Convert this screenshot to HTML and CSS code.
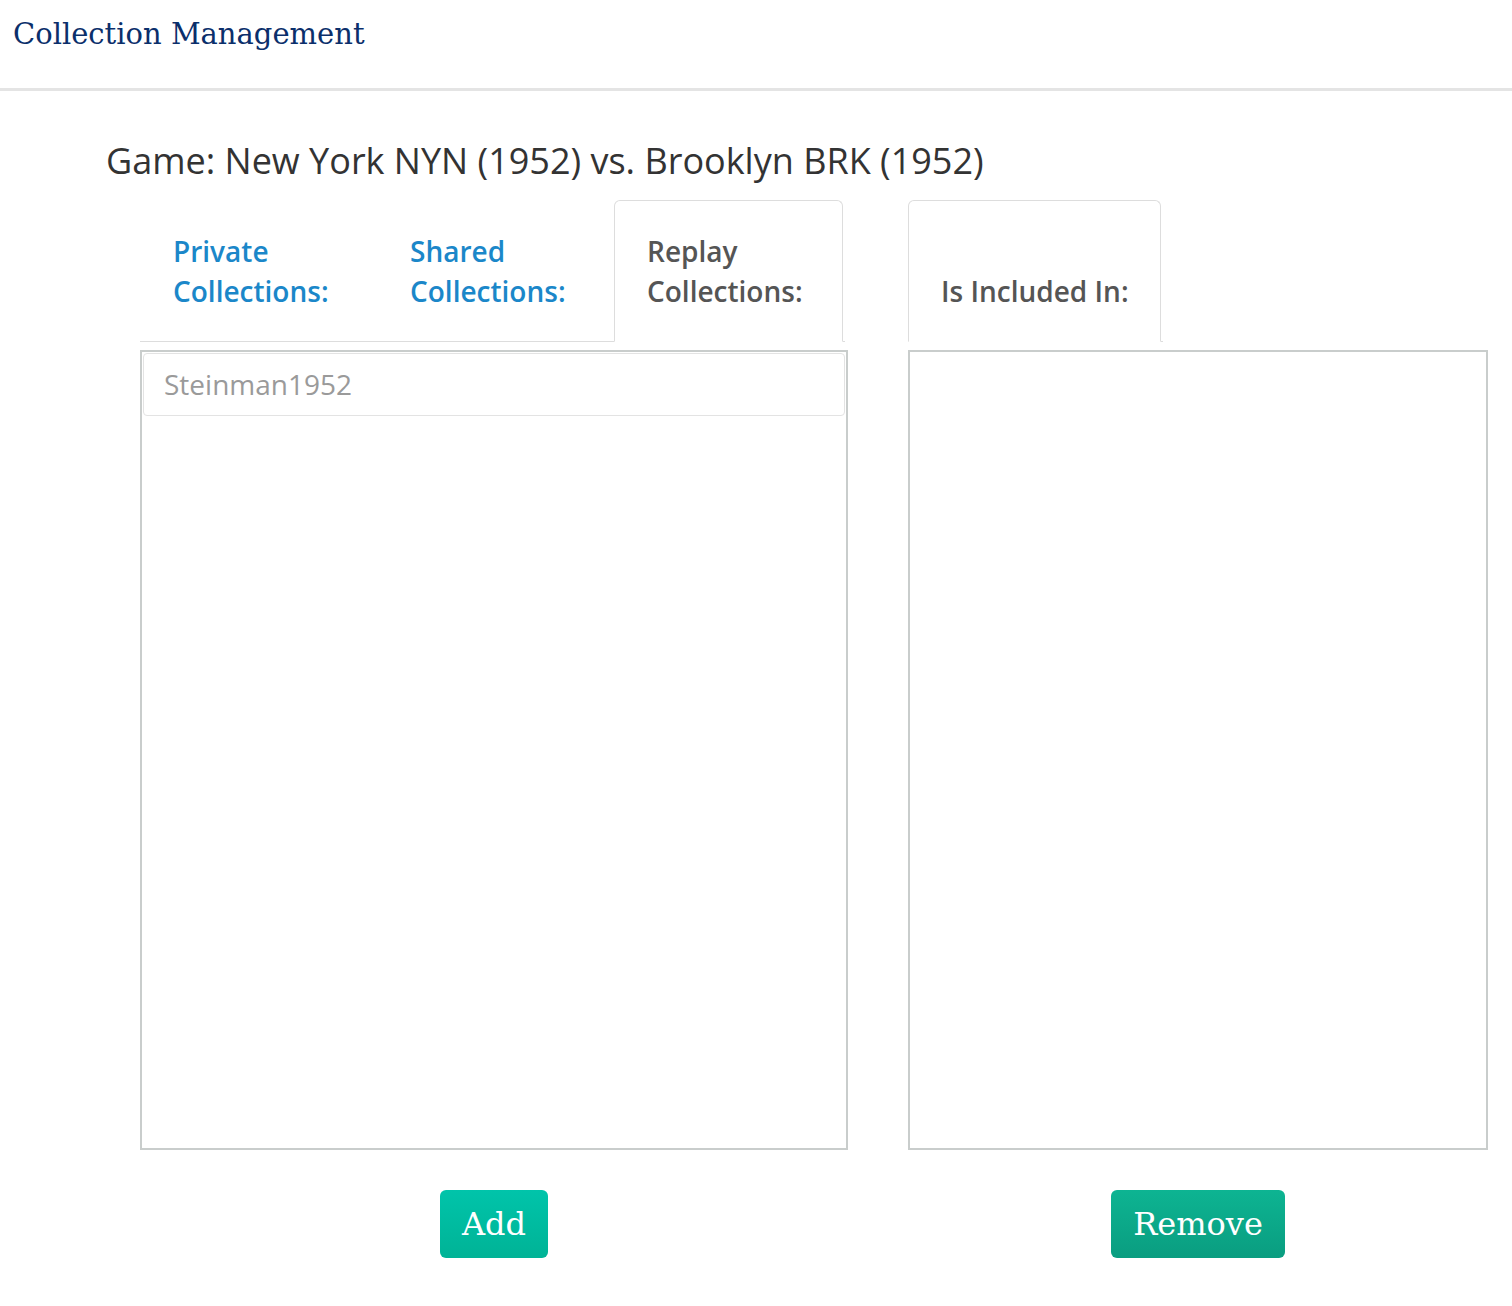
FILE: index.html
```html
<!DOCTYPE html>
<html lang="en">
<head>
  <meta charset="UTF-8">
  <meta name="viewport" content="width=device-width, initial-scale=1.0">
  <title>Collection Management</title>
  <link rel="stylesheet" href="styles.css">
</head>
<body>
  <header class="topbar">
    <h1>Collection Management</h1>
  </header>

  <main class="page">
    <h2 class="game-title">Game: New York NYN (1952) vs. Brooklyn BRK (1952)</h2>

    <div class="columns">
      <!-- Collections available -->
      <section class="col col-left">
        <ul class="tabs">
          <li class="tab"><a href="#">Private<br>Collections:</a></li>
          <li class="tab"><a href="#">Shared<br>Collections:</a></li>
          <li class="tab tab-replay active"><a href="#">Replay<br>Collections:</a></li>
        </ul>
        <div class="listbox">
          <div class="list-item">Steinman1952</div>
        </div>
        <div class="actions">
          <button class="btn btn-add">Add</button>
        </div>
      </section>

      <!-- Collections containing the game -->
      <section class="col col-right">
        <ul class="tabs">
          <li class="tab tab-included active"><a href="#">Is Included In:</a></li>
        </ul>
        <div class="listbox"></div>
        <div class="actions">
          <button class="btn btn-remove">Remove</button>
        </div>
      </section>
    </div>
  </main>
</body>
</html>
```

FILE: styles.css
```css
body {
  margin: 0;
  font-family: "Open Sans", Arial, sans-serif;
  color: #333;
  background: #fff;
}
.topbar {
  height: 88px;
  border-bottom: 3px solid #e4e4e4;
  padding: 0 13px;
}
.topbar h1 {
  margin: 0;
  padding-top: 14px;
  font-family: "DejaVu Serif", "Liberation Serif", serif;
  font-weight: normal;
  font-size: 29px;
  line-height: 40px;
  color: #0b2f6b;
}
.page {
  padding: 0 24px 0 106px;
}
.game-title {
  margin: 48px 0 17px;
  font-size: 36px;
  font-weight: normal;
  line-height: 44px;
  color: #333;
}
.columns {
  display: flex;
  gap: 60px;
  margin-left: 34px;
}
.col-left {
  width: 708px;
}
.col-right {
  width: 580px;
}
.tabs {
  display: inline-flex;
  align-items: flex-end;
  margin: 0 0 8px;
  padding: 0;
  list-style: none;
  border-bottom: 1px solid #ddd;
  vertical-align: top;
}
.tab {
  width: 235px;
  height: 142px;
  margin: 0 2px -1px 0;
  border: 1px solid transparent;
  border-radius: 6px 6px 0 0;
  box-sizing: border-box;
  display: flex;
  align-items: flex-end;
}
.tab a {
  display: block;
  padding: 0 0 30px 32px;
  font-size: 28px;
  font-weight: 600;
  line-height: 40px;
  color: #1b87c9;
  text-decoration: none;
}
.tab.active {
  border-color: #ddd;
  border-bottom-color: #fff;
  background: #fff;
}
.tab.active a {
  color: #555;
}
.tab-replay {
  width: 229px;
}
.tab-included {
  width: 253px;
}
.listbox {
  height: 800px;
  border: 2px solid #c9cdcc;
  box-sizing: border-box;
  padding: 1px;
}
.list-item {
  height: 63px;
  border: 1px solid #e3e3e3;
  border-radius: 4px;
  box-sizing: border-box;
  padding-left: 20px;
  font-size: 28px;
  line-height: 61px;
  color: #9a9a9a;
}
.actions {
  display: flex;
  justify-content: center;
  margin-top: 40px;
}
.btn {
  height: 68px;
  padding: 0 22px;
  border: none;
  border-radius: 6px;
  font-family: "DejaVu Serif", "Liberation Serif", serif;
  font-size: 32px;
  color: #fff;
  cursor: pointer;
}
.btn-add {
  background: linear-gradient(#00c4aa, #00b396);
}
.btn-remove {
  background: linear-gradient(#0db492, #0a9d80);
}
```
